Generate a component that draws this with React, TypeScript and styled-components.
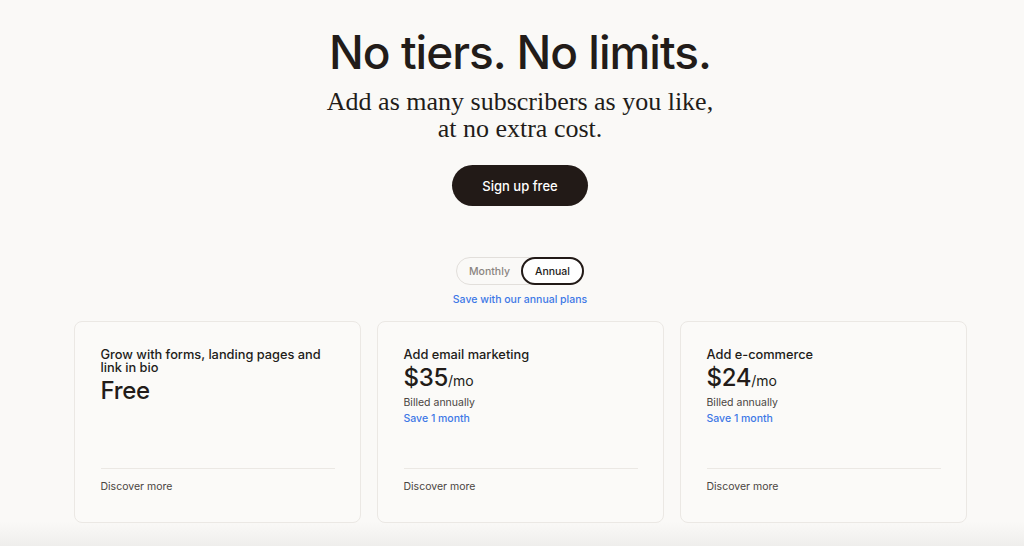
import styled, { createGlobalStyle } from 'styled-components';

const GlobalStyle = createGlobalStyle`
  html, body {
    margin: 0;
    padding: 0;
  }

  body {
    font-family: Inter, "Noto Sans", sans-serif;
    color: #221c19;
    background: #faf9f7;
  }
`;

const Page = styled.div`
  display: flex;
  flex-direction: column;
  align-items: center;

  min-height: 546px;
  box-sizing: border-box;
  padding: 24px 0 0 16px;

  background: linear-gradient(to bottom, #faf9f7 0, #faf9f7 522px, #efeeec 546px);
`;

const Title = styled.h1`
  margin: 0;
  font-size: 46px;
  font-weight: 500;
  line-height: 56px;
  letter-spacing: -1px;
  color: #221c19;
`;

const Subtitle = styled.p`
  margin: 8px 0 0;
  font-family: "Liberation Serif", "DejaVu Serif", serif;
  font-size: 26px;
  line-height: 27px;
  text-align: center;
  color: #221c19;
`;

const SignUp = styled.button`
  margin-top: 23px;
  width: 136px;
  height: 41px;

  border: none;
  border-radius: 21px;

  background: #221a17;
  color: #ffffff;

  font-family: Inter, sans-serif;
  font-size: 13px;
  font-weight: 500;
`;

const Toggle = styled.div`
  display: flex;
  margin-top: 51px;

  height: 28px;
  border: 1px solid #e2dfdb;
  border-radius: 14px;
  box-sizing: border-box;
`;

const ToggleOption = styled.button<{ $active?: boolean }>`
  display: flex;
  align-items: center;
  justify-content: center;

  margin: -1px;
  padding: 0 12px;

  border: ${(p) => (p.$active ? '2px solid #221a17' : '1px solid transparent')};
  border-radius: 14px;

  background: ${(p) => (p.$active ? '#ffffff' : 'transparent')};
  color: ${(p) => (p.$active ? '#221c19' : '#8a8581')};

  font-family: Inter, sans-serif;
  font-size: 10.5px;
  font-weight: 500;
`;

const SaveNote = styled.div`
  margin-top: 8px;
  font-size: 10.5px;
  font-weight: 500;
  color: #3d78e6;
`;

const Cards = styled.div`
  display: grid;
  grid-template-columns: repeat(3, 287px);
  gap: 16px;
  margin-top: 15px;
`;

const Card = styled.div`
  display: flex;
  flex-direction: column;

  height: 202px;
  box-sizing: border-box;
  padding: 26px 25px 0 26px;

  border: 1px solid #ebe8e4;
  border-radius: 8px;
  background: #fbfaf8;
`;

const CardTitle = styled.div`
  font-size: 12.8px;
  font-weight: 500;
  line-height: 13px;
  color: #221c19;
`;

const Price = styled.div`
  margin-top: 3px;
  font-size: 24px;
  font-weight: 500;
  line-height: 27px;
  letter-spacing: -0.3px;
  color: #221c19;
`;

const Per = styled.span`
  font-size: 14px;
  font-weight: 400;
  letter-spacing: 0;
`;

const Billed = styled.div`
  margin-top: 2px;
  font-size: 10.5px;
  line-height: 14px;
  color: #4a4541;
`;

const Save = styled.div`
  margin-top: 2px;
  font-size: 10.5px;
  font-weight: 500;
  line-height: 14px;
  color: #3d78e6;
`;

const Footer = styled.div`
  margin-top: auto;
  margin-bottom: 28px;
  padding-top: 11px;

  border-top: 1px solid #ebe8e4;

  font-size: 10.5px;
  line-height: 14px;
  color: #4a4541;
`;

type Plan = {
  title: string;
  price: string;
  per?: boolean;
};

const plans: Plan[] = [
  { title: 'Grow with forms, landing pages and link in bio', price: 'Free' },
  { title: 'Add email marketing', price: '$35', per: true },
  { title: 'Add e-commerce', price: '$24', per: true },
];

export default function App() {
  return (
    <>
      <GlobalStyle />
      <Page>
        <Title>No tiers. No limits.</Title>
        <Subtitle>
          Add as many subscribers as you like,
          <br />
          at no extra cost.
        </Subtitle>
        <SignUp>Sign up free</SignUp>

        <Toggle>
          <ToggleOption>Monthly</ToggleOption>
          <ToggleOption $active>Annual</ToggleOption>
        </Toggle>
        <SaveNote>Save with our annual plans</SaveNote>

        <Cards>
          {plans.map((plan) => (
            <Card key={plan.title}>
              <CardTitle>{plan.title}</CardTitle>
              <Price>
                {plan.price}
                {plan.per && <Per>/mo</Per>}
              </Price>
              {plan.per && (
                <>
                  <Billed>Billed annually</Billed>
                  <Save>Save 1 month</Save>
                </>
              )}
              <Footer>Discover more</Footer>
            </Card>
          ))}
        </Cards>
      </Page>
    </>
  );
}
